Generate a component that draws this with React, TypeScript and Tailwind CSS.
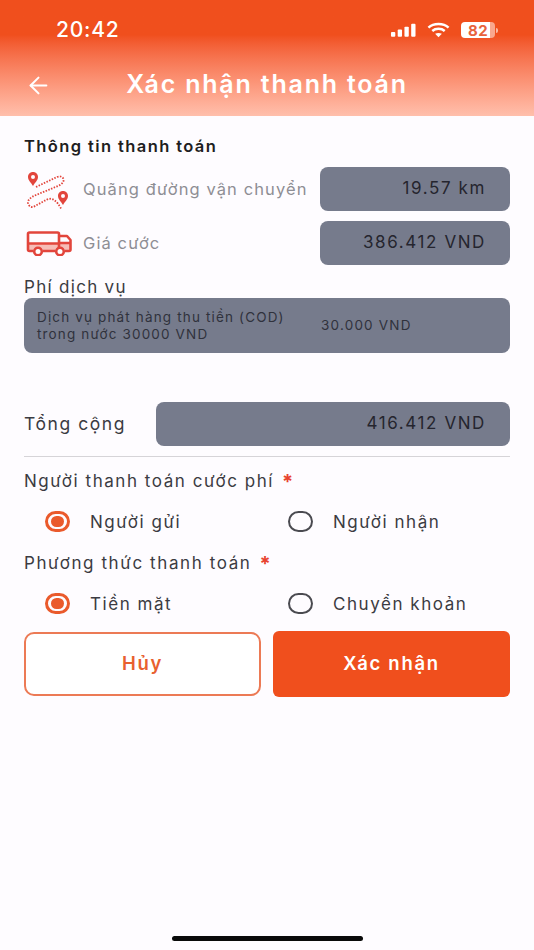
import { ArrowLeft } from "lucide-react";

const PIN = "M5 0 C2 0 0 2.200 0 5 C0 8.500 3.500 11 5 14 C6.500 11 10 8.500 10 5 C10 2.200 8 0 5 0 Z M5 3 A2 2 0 1 0 5 7 A2 2 0 1 0 5 3 Z";

function RouteIcon() {
  return (
    <svg width="46" height="40" viewBox="0 0 46 40" fill="none">
      <path
        d="M10 17 L31 7 C36 5 39 9 37 12 C36 14 34 15 32 16 L10 25 C5 27 1.500 30 2 33 C3 37 6 38 9 36 L21 29.500 C26 27 31 31 35 38.500"
        stroke="#e2453c"
        strokeWidth="1.800"
        strokeDasharray="1.500 1.400"
      />
      <path fillRule="evenodd" d={PIN} transform="translate(2 2)" fill="#e2453c" />
      <path fillRule="evenodd" d={PIN} transform="translate(32 21)" fill="#e2453c" />
    </svg>
  );
}

function TruckIcon() {
  return (
    <svg width="46" height="26" viewBox="0 0 46 26" fill="none">
      <rect x="3" y="13" width="30" height="8" fill="#f6bdb7" />
      <path d="M33 13 H44 V21 H33 Z" fill="#f6bdb7" />
      <path
        d="M7 21 H3.500 C2.500 21 2 20.500 2 19.500 V4 C2 3 2.500 2.500 3.500 2.500 H31.500 C32.500 2.500 33 3 33 4 V21 M17 21 H29 M39 21 H43 C44 21 44.500 20.500 44.500 19.500 V10 L41 6 H33 M2 13.500 H33 M33 13 H44.500"
        stroke="#e2453c"
        strokeWidth="2.600"
        strokeLinejoin="round"
      />
      <circle cx="12" cy="21.500" r="3.800" stroke="#e2453c" strokeWidth="2.600" fill="#fff" />
      <circle cx="34" cy="21.500" r="3.800" stroke="#e2453c" strokeWidth="2.600" fill="#fff" />
    </svg>
  );
}

function Radio({ checked, label }: { checked?: boolean; label: string }) {
  return (
    <div className="flex items-center gap-[20px]">
      {checked ? (
        <div className="w-[25px] h-[21px] rounded-full border-[3px] border-[#ea5a2c] flex items-center justify-center">
          <div className="w-[13px] h-[11px] rounded-full bg-[#ea5a2c]"></div>
        </div>
      ) : (
        <div className="w-[25px] h-[21px] rounded-full border-[2.500px] border-[#4a4a50]"></div>
      )}
      <span className="text-[17px] tracking-[1.55px] leading-[20px] text-[#3b3b42]">{label}</span>
    </div>
  );
}

export default function App() {
  return (
    <div className="relative w-[534px] h-[950px] overflow-hidden bg-[#fefcff] font-['Inter',sans-serif]">
      {/* Header */}
      <div className="h-[116px] bg-gradient-to-b from-[#f04f1d] from-[30%] to-[#ffbfac] text-white">
        <div className="flex items-center justify-between pl-[56px] pr-[36px] pt-[16px] h-[44px]">
          <span className="text-[21px] font-medium tracking-[0.8px] leading-[26px]">20:42</span>
          <div className="flex items-center gap-[11px]">
            <svg width="26" height="15" viewBox="0 0 27 15" fill="white">
              <rect x="1" y="9" width="4.500" height="5" rx="1" />
              <rect x="8" y="6.500" width="4.500" height="7.500" rx="1" />
              <rect x="15" y="3.500" width="4.500" height="10.500" rx="1" />
              <rect x="22" y="0.500" width="4.500" height="13.500" rx="1" />
            </svg>
            <svg width="23" height="16" viewBox="0 0 24 16" fill="none" stroke="white" strokeWidth="2.600">
              <path d="M1.500 5.500 C7 0.500 17 0.500 22.500 5.500" />
              <path d="M5.500 9 C9 6 15 6 18.500 9" />
              <path d="M12 15.500 L8.500 12 C10.500 10.700 13.500 10.700 15.500 12 Z" fill="white" stroke="none" />
            </svg>
            <div className="flex items-center gap-[1px]">
              <div className="w-[34px] h-[16px] rounded-[4px] bg-gradient-to-r from-white from-[84%] to-[#f9a78e] to-[84%] flex items-center justify-center">
                <span className="text-[15px] font-bold leading-none tracking-[0.5px] text-[#e8623c]">82</span>
              </div>
              <div className="w-[2px] h-[5px] rounded-r-sm bg-white/60"></div>
            </div>
          </div>
        </div>
        <div className="relative flex items-center justify-center h-[50px] mt-[16px]">
          <ArrowLeft className="absolute left-[25px] w-[27px] h-[27px]" strokeWidth={1.800} />
          <span className="text-[25px] font-semibold tracking-[1.8px]">Xác nhận thanh toán</span>
        </div>
      </div>

      {/* Content */}
      <div className="px-6 pt-[20px]">
        <div className="text-[16.500px] font-semibold tracking-[1.4px] leading-[20px] text-[#1e1e22]">Thông tin thanh toán</div>

        <div className="flex items-center h-[44px] mt-[11px]">
          <div className="w-[59px] shrink-0 pl-[2px] pt-[2px]"><RouteIcon /></div>
          <span className="flex-1 text-[16.500px] tracking-[1.1px] text-[#8e8e94] whitespace-nowrap">Quãng đường vận chuyển</span>
          <div className="w-[190px] h-[44px] rounded-[8px] bg-[#767b8c] flex items-center justify-end pr-[24px] text-[17px] tracking-[1.6px] text-[#25252e]">19.57 km</div>
        </div>

        <div className="flex items-center h-[44px] mt-[10px]">
          <div className="w-[59px] shrink-0 pl-[2px]"><TruckIcon /></div>
          <span className="flex-1 text-[16.500px] tracking-[1.1px] text-[#8e8e94]">Giá cước</span>
          <div className="w-[190px] h-[44px] rounded-[8px] bg-[#767b8c] flex items-center justify-end pr-[24px] text-[17px] tracking-[1.6px] text-[#25252e]">386.412 VND</div>
        </div>

        <div className="mt-[11px] text-[17px] tracking-[1.3px] leading-[22px] text-[#3b3b42]">Phí dịch vụ</div>
        <div className="h-[55px] rounded-[8px] bg-[#767b8c] flex items-center pl-[13px] text-[#30323c]">
          <div className="w-[284px] text-[13.500px] tracking-[1.15px] leading-[17px]">
            Dịch vụ phát hàng thu tiền (COD)
            <br />
            trong nước 30000 VND
          </div>
          <span className="text-[13.500px] tracking-[1.2px]">30.000 VND</span>
        </div>

        <div className="flex items-center h-[44px] mt-[49px]">
          <span className="w-[132px] shrink-0 text-[17.500px] tracking-[1.55px] text-[#3b3b42]">Tổng cộng</span>
          <div className="flex-1 h-[44px] rounded-[8px] bg-[#767b8c] flex items-center justify-end pr-[24px] text-[17px] tracking-[1.6px] text-[#25252e]">416.412 VND</div>
        </div>

        <div className="h-px bg-[#d6d4d8] mt-[10px]"></div>

        <div className="mt-[14px] h-[22px] flex items-center gap-[8px] text-[17px] tracking-[1.55px] text-[#3b3b42]">
          Người thanh toán cước phí <span className="text-[#e8432f] font-bold text-[20px] leading-none">*</span>
        </div>
        <div className="flex h-[21px] mt-[18px] pl-[21px]">
          <div className="w-[243px]"><Radio checked label="Người gửi" /></div>
          <Radio label="Người nhận" />
        </div>
        <div className="mt-[21px] h-[22px] flex items-center gap-[8px] text-[17px] tracking-[1.6px] text-[#3b3b42]">
          Phương thức thanh toán <span className="text-[#e8432f] font-bold text-[20px] leading-none">*</span>
        </div>
        <div className="flex h-[21px] mt-[18px] pl-[21px]">
          <div className="w-[243px]"><Radio checked label="Tiền mặt" /></div>
          <Radio label="Chuyển khoản" />
        </div>

        <div className="flex gap-[12px] mt-[17px]">
          <button className="w-[237px] h-[64px] mt-[1px] rounded-[10px] border-2 border-[#ec7a55] bg-white text-[18.500px] font-semibold tracking-[1.7px] text-[#e8602f]">Hủy</button>
          <button className="w-[237px] h-[66px] rounded-[6px] bg-[#f04f1d] text-[18.500px] font-semibold tracking-[1.7px] text-white">Xác nhận</button>
        </div>
      </div>

      {/* Home indicator */}
      <div className="absolute left-[172px] top-[936px] w-[191px] h-[5px] rounded-full bg-[#0a0a0a]"></div>
    </div>
  );
}
